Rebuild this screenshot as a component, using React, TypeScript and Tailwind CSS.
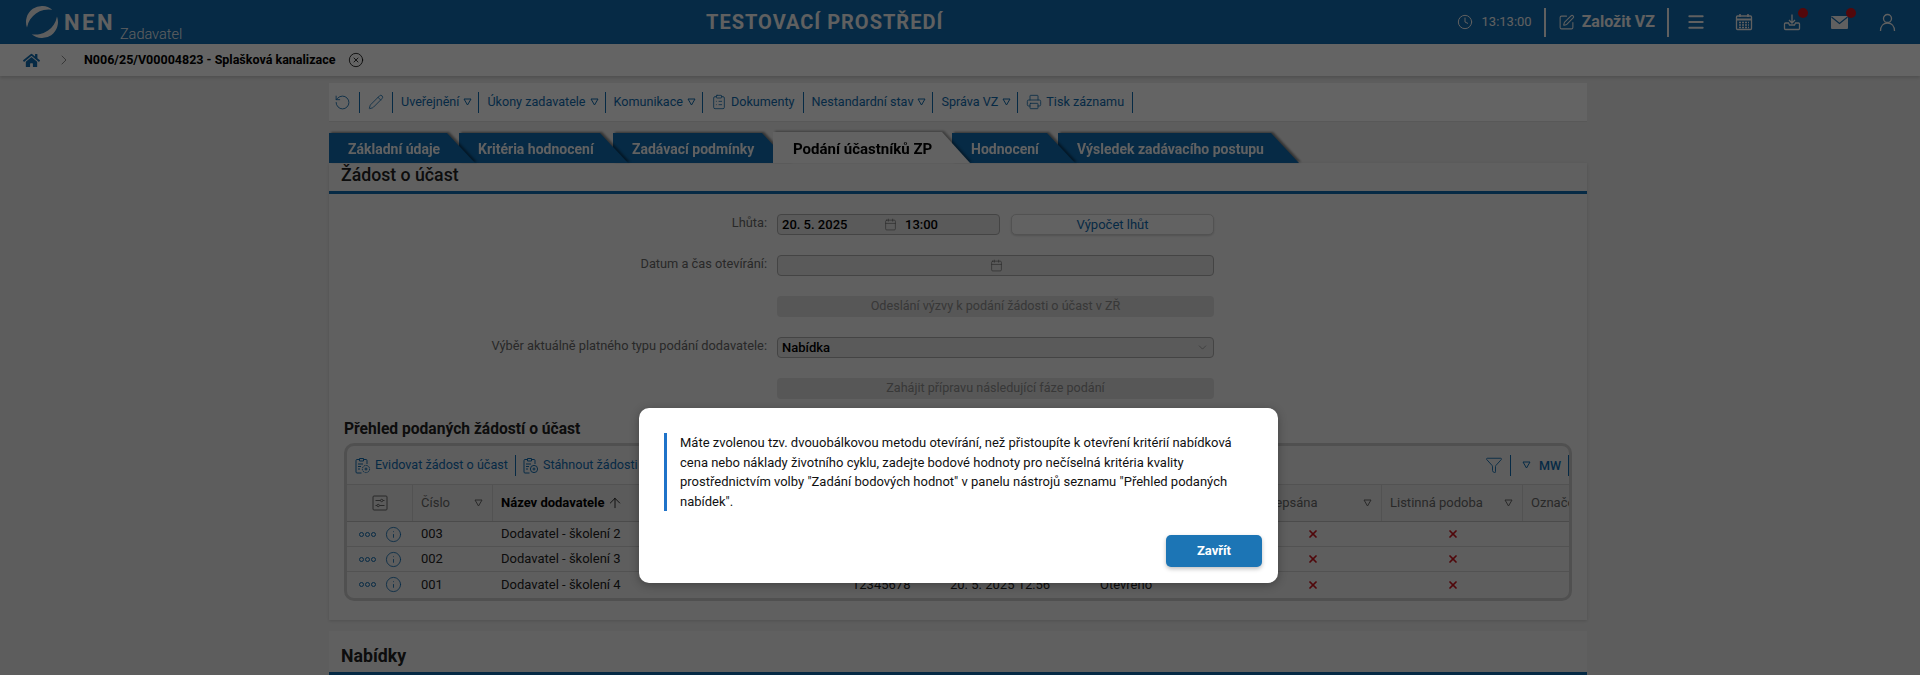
import { Clock, SquarePen, Menu, Calendar, ChevronRight, CircleX, RotateCcw, Pencil, ClipboardList, Printer, ChevronDown, Funnel, Info, ArrowUp, X } from 'lucide-react';
import { FaHome } from 'react-icons/fa';

const tabShape = '[clip-path:polygon(0_0,calc(100%-28px)_0,100%_100%,0_100%)]';

function Tri({ className = '' }: { className?: string }) {
  return (
    <svg width="9" height="8" viewBox="0 0 9 8" className={`shrink-0 ${className}`}>
      <path d="M1 1h7L4.5 7z" fill="none" stroke="currentColor" strokeWidth="1" />
    </svg>
  );
}

function Sep() {
  return <span className="w-px h-[21px] bg-[#0f69ac] shrink-0" />;
}

function Logo() {
  return (
    <svg width="34" height="34" viewBox="0 0 34 34" className="shrink-0">
      <path d="M27.3 4.7A16 16 0 0 0 2 22.5A22 22 0 0 1 27.3 4.7z" fill="#ececec" />
      <path d="M6.7 29.3A16 16 0 0 0 32 11.5A22 22 0 0 1 6.7 29.3z" fill="#ececec" />
    </svg>
  );
}

function CalendarGrid() {
  return (
    <svg width="18" height="18" viewBox="0 0 18 18" className="ml-[29px] shrink-0" fill="none" stroke="currentColor">
      <rect x="1.5" y="3" width="15" height="13.5" rx="1" strokeWidth="1.3" />
      <path d="M1.5 6.5h15" strokeWidth="2" />
      <path d="M5 1v3M13 1v3" strokeWidth="1.6" />
      <path d="M4 9.5h10M4 12h10M4 14.5h10" strokeWidth="1.4" strokeDasharray="2 1" />
    </svg>
  );
}

function Inbox() {
  return (
    <svg width="18" height="18" viewBox="0 0 18 18" className="shrink-0" fill="none" stroke="currentColor" strokeWidth="1.3">
      <path d="M9 1.5v8M6 7l3 3 3-3" />
      <path d="M5.5 10H2.5a1 1 0 0 0-1 1v4.5a1 1 0 0 0 1 1h13a1 1 0 0 0 1-1V11a1 1 0 0 0-1-1h-3l-1 2h-5z" />
    </svg>
  );
}

function MailFilled() {
  return (
    <svg width="19" height="15" viewBox="0 0 19 15" className="shrink-0">
      <rect x="1" y="1" width="17" height="13" rx="1" fill="currentColor" />
      <path d="M1.5 2l8 6.5 8-6.5" fill="none" stroke="#0f69ac" strokeWidth="1.2" />
    </svg>
  );
}

function ClipBadge({ plus }: { plus?: boolean }) {
  return (
    <svg width="17" height="17" viewBox="0 0 17 17" className="shrink-0" fill="none" stroke="currentColor" strokeWidth="1">
      <path d="M5 2.5H3a1 1 0 0 0-1 1V15a1 1 0 0 0 1 1h4.5M10 2.5h2a1 1 0 0 1 1 1V7" />
      <path d="M5.5 1.5h4v2.5h-4zM4 7h5M4 9.5h3M4 12h2" />
      <circle cx="12" cy="12" r="3.6" strokeDasharray={plus ? undefined : '1.6 0.8'} />
      {plus ? <path d="M10.5 12h3M12 10.5v3" /> : <circle cx="12" cy="12" r="1" />}
    </svg>
  );
}

function Sliders() {
  return (
    <svg width="16" height="16" viewBox="0 0 16 16" fill="none" stroke="currentColor" strokeWidth="1">
      <rect x="1" y="1" width="14" height="14" rx="1" />
      <path d="M3.5 5.5h5M11 5.5h1.5M3.5 10.5H5M7.5 10.5h5" />
      <circle cx="9.7" cy="5.5" r="1.2" />
      <circle cx="6.2" cy="10.5" r="1.2" />
    </svg>
  );
}

function Tab({ label, className }: { label: string; className: string }) {
  return (
    <div className={`relative drop-shadow-[2px_-1px_1px_rgba(0,0,0,0.45)] ${className}`}>
      <div className={`h-full bg-[#0f69ac] text-[#f2f2f2] font-bold text-[14px] pl-[19px] pt-[6px] whitespace-nowrap ${tabShape}`}>
        {label}
      </div>
    </div>
  );
}

function FormRow({ label, children }: { label?: string; children: React.ReactNode }) {
  return (
    <div className="flex h-[21px] items-center">
      <div className="w-[448px] pr-[10px] text-right text-[12.8px] text-[#666] -mt-[3px]">{label}</div>
      <div className="w-[437px] h-full flex gap-[11px]">{children}</div>
    </div>
  );
}

function DisabledButton({ label }: { label: string }) {
  return (
    <div className="w-full h-full rounded-[4px] bg-[#d9d9d9] text-[#8c8c8c] text-[12.6px] flex items-center justify-center">{label}</div>
  );
}

// only the last row sticks out below the dialog
const rows = [
  { no: '003', name: 'Dodavatel - školení 2' },
  { no: '002', name: 'Dodavatel - školení 3' },
  { no: '001', name: 'Dodavatel - školení 4', ico: '12345678', date: '20. 5. 2025 12:56', state: 'Otevřeno' },
];

const triGap = '-ml-[4px] -mr-[2px]';

export default function App() {
  return (
    <div className="relative h-[675px] overflow-hidden bg-[#e9e9e9] font-['Roboto',sans-serif] text-[#222]">
      <header className="h-11 bg-[#0f69ac] text-[#f0f0f0] flex items-center">
        <div className="flex items-start w-[706px] pl-[25px] h-full pt-[5px]">
          <Logo />
          <span className="ml-[5px] mt-[6px] text-[22px] leading-6 font-bold tracking-[2.5px]">NEN</span>
          <span className="ml-[5px] mt-[20px] text-[14.5px] leading-5 font-light">Zadavatel</span>
        </div>
        <div className="text-[20px] font-bold tracking-[1px] whitespace-nowrap">TESTOVACÍ PROSTŘEDÍ</div>
        <div className="ml-auto flex items-center h-full pr-[23px]">
          <Clock size={16} strokeWidth={1.5} />
          <span className="ml-[9px] text-[13px]">13:13:00</span>
          <span className="ml-[12px] w-[2px] h-[29px] bg-[#f0f0f0]" />
          <SquarePen size={17} strokeWidth={1.5} className="ml-[12px]" />
          <span className="ml-[7px] text-[16px] font-bold whitespace-nowrap">Založit VZ</span>
          <span className="ml-[12px] w-[2px] h-[29px] bg-[#f0f0f0]" />
          <Menu size={20} strokeWidth={2.4} className="ml-[17px]" />
          <CalendarGrid />
          <div className="relative ml-[30px]">
            <Inbox />
            <span className="absolute -top-[5px] left-[15px] size-[10px] rounded-full bg-[#d0141c]" />
          </div>
          <div className="relative ml-[29px]">
            <MailFilled />
            <span className="absolute -top-[7px] left-[16px] size-[10px] rounded-full bg-[#d0141c]" />
          </div>
          <svg width="19" height="19" viewBox="0 0 19 19" className="ml-[29px]" fill="none" stroke="currentColor" strokeWidth="1.3">
            <circle cx="9.5" cy="5.5" r="4" />
            <path d="M2.5 18c0-5 3-8 7-8s7 3 7 8" />
          </svg>
        </div>
      </header>

      <div className="h-8 bg-[#f9f9f9] flex items-center pl-[23px] shadow-[0_2px_3px_rgba(0,0,0,0.15)]">
        <FaHome size={17} className="text-[#0f69ac]" />
        <ChevronRight size={16} strokeWidth={1} className="ml-[16px] text-[#555]" />
        <span className="ml-[12px] text-[12.5px] font-bold text-black whitespace-nowrap">N006/25/V00004823 - Splašková kanalizace</span>
        <CircleX size={16} strokeWidth={1.2} className="ml-[13px] text-black" />
      </div>

      <main className="ml-[329px] w-[1258px] isolate">
        <div className="mt-[7px] h-[39px] bg-[#f9f9f9] border-b border-[#ddd] flex items-center gap-[8px] pl-[5px] text-[12.6px] text-[#0f69ac] whitespace-nowrap">
          <RotateCcw size={17} strokeWidth={1.2} />
          <Sep />
          <Pencil size={16} strokeWidth={1.2} />
          <Sep />
          <span>Uveřejnění</span><Tri className={triGap} /><Sep />
          <span>Úkony zadavatele</span><Tri className={triGap} /><Sep />
          <span>Komunikace</span><Tri className={triGap} /><Sep />
          <ClipboardList size={16} strokeWidth={1.2} className="-mr-[4px]" />
          <span>Dokumenty</span><Sep />
          <span>Nestandardní stav</span><Tri className={triGap} /><Sep />
          <span>Správa VZ</span><Tri className={triGap} /><Sep />
          <Printer size={16} strokeWidth={1.2} className="-mr-[4px]" />
          <span>Tisk záznamu</span><Sep />
        </div>

        <div className="mt-[10px] h-[31px] flex items-end">
          <Tab label="Základní údaje" className="z-30 w-[146px] h-[30px]" />
          <Tab label="Kritéria hodnocení" className="z-20 w-[169px] h-[30px] -ml-[16px]" />
          <Tab label="Zadávací podmínky" className="z-10 w-[177px] h-[30px] -ml-[15px]" />
          <div className="relative z-40 w-[197px] h-[31px] -ml-[17px] drop-shadow-[2px_-1px_1px_rgba(0,0,0,0.35)]">
            <div className={`h-full bg-[#f5f5f5] text-black font-bold text-[15px] pl-[20px] pt-[6px] whitespace-nowrap ${tabShape}`}>Podání účastníků ZP</div>
          </div>
          <Tab label="Hodnocení" className="z-20 w-[123px] h-[30px] -ml-[18px]" />
          <Tab label="Výsledek zadávacího postupu" className="z-10 w-[241px] h-[30px] -ml-[17px]" />
        </div>

        <section className="bg-[#f0f0f0] h-[457px] shadow-[0_1px_3px_rgba(0,0,0,0.15)]">
          <h2 className="h-[31px] border-b-[3px] border-[#0f69ac] pl-[12px] text-[17.7px] font-medium leading-[24px] text-[#222]">Žádost o účast</h2>
          <div className="pt-[20px] flex flex-col gap-[20px]">
            <FormRow label="Lhůta:">
              <div className="w-[223px] border border-[#aaa] rounded-[4px] bg-[#e2e2e2] flex items-center pl-[4px] text-[13px] font-medium text-black">
                <span className="w-[102px]">20. 5. 2025</span>
                <Calendar size={13} strokeWidth={1.2} className="text-[#666]" />
                <span className="ml-[8px]">13:00</span>
              </div>
              <div className="flex-1 border border-[#ccc] rounded-[5px] bg-[#f5f5f5] shadow-[0_1px_2px_rgba(0,0,0,0.15)] text-[#0f69ac] text-[13px] flex items-center justify-center">Výpočet lhůt</div>
            </FormRow>
            <FormRow label="Datum a čas otevírání:">
              <div className="w-full border border-[#aaa] rounded-[4px] bg-[#e2e2e2] flex items-center pl-[212px]">
                <Calendar size={13} strokeWidth={1.2} className="text-[#666]" />
              </div>
            </FormRow>
            <FormRow><DisabledButton label="Odeslání výzvy k podání žádosti o účast v ZŘ" /></FormRow>
            <FormRow label="Výběr aktuálně platného typu podání dodavatele:">
              <div className="w-full border border-[#aaa] rounded-[4px] bg-[#e2e2e2] flex items-center justify-between px-[4px] text-[13px] font-medium text-black">
                <span>Nabídka</span>
                <ChevronDown size={13} strokeWidth={1} className="text-[#666]" />
              </div>
            </FormRow>
            <FormRow><DisabledButton label="Zahájit přípravu následující fáze podání" /></FormRow>
          </div>

          <h3 className="mt-[20px] h-[24px] pl-[15px] text-[15.6px] font-bold leading-5 text-[#222]">Přehled podaných žádostí o účast</h3>
          <div className="ml-[15px] w-[1228px] h-[158px] border-[3px] border-[#c8c8c8] rounded-[10px] overflow-hidden bg-[#ececec]">
            <div className="h-[39px] flex items-center text-[12.6px] text-[#0f69ac] border-b border-[#ccc] pl-[7px] whitespace-nowrap">
              <ClipBadge />
              <span className="ml-[4px]">Evidovat žádost o účast</span>
              <span className="ml-[7px] w-px h-[21px] bg-[#0f69ac]" />
              <span className="ml-[6px]"><ClipBadge plus /></span>
              <span className="ml-[4px]">Stáhnout žádosti</span>
              <div className="ml-auto flex items-center">
                <Funnel size={18} strokeWidth={1.2} />
                <span className="ml-[7px] w-px h-[21px] bg-[#0f69ac]" />
                <Tri className="ml-[11px]" />
                <span className="ml-[8px] font-medium pt-[2px]">MW</span>
                <span className="ml-[7px] w-px h-[21px] bg-[#0f69ac]" />
              </div>
            </div>
            <div className="h-[37px] bg-[#e3e3e3] border-b border-[#bbb] flex text-[13px] text-[#666] whitespace-nowrap">
              <div className="w-[66px] shrink-0 border-r border-[#ccc] flex items-center justify-center"><Sliders /></div>
              <div className="w-[80px] shrink-0 border-r border-[#ccc] flex items-center justify-between pl-[8px] pr-[9px]">Číslo<Tri /></div>
              <div className="w-[347px] shrink-0 border-r border-[#ccc] flex items-center pl-[8px] font-bold text-black">Název dodavatele<ArrowUp size={16} strokeWidth={1.2} className="ml-[2px]" /></div>
              <div className="w-[100px] shrink-0 border-r border-[#ccc]" />
              <div className="w-[150px] shrink-0 border-r border-[#ccc]" />
              <div className="w-[138px] shrink-0 border-r border-[#ccc]" />
              <div className="w-[154px] shrink-0 border-r border-[#ccc] flex items-center justify-between pl-[8px] pr-[9px]">Je podepsána<Tri /></div>
              <div className="w-[141px] shrink-0 border-r border-[#ccc] flex items-center justify-between pl-[8px] pr-[9px]">Listinná podoba<Tri /></div>
              <div className="pl-[8px] flex items-center">Označení</div>
            </div>
            {rows.map((r) => (
              <div key={r.no} className="h-[25px] flex items-center text-[13px] text-[#222] border-b border-[#ccc] last:border-b-0 whitespace-nowrap">
                <div className="w-[66px] shrink-0 flex items-center pl-[12px] text-[#0f69ac]">
                  <span className="flex gap-[1px]">
                    <span className="size-[5px] rounded-full border border-current" />
                    <span className="size-[5px] rounded-full border border-current" />
                    <span className="size-[5px] rounded-full border border-current" />
                  </span>
                  <Info size={17} strokeWidth={1.2} className="ml-[9px]" />
                </div>
                <div className="w-[80px] shrink-0 pl-[8px]">{r.no}</div>
                <div className="w-[347px] shrink-0 pl-[8px]">{r.name}</div>
                <div className="w-[100px] shrink-0 pl-[12px]">{r.ico}</div>
                <div className="w-[150px] shrink-0 pl-[10px]">{r.date}</div>
                <div className="w-[138px] shrink-0 pl-[10px]">{r.state}</div>
                <div className="w-[154px] shrink-0 pl-[79px]"><X size={12} strokeWidth={3.5} className="text-[#c8141c]" /></div>
                <div className="w-[141px] shrink-0 pl-[65px]"><X size={12} strokeWidth={3.5} className="text-[#c8141c]" /></div>
              </div>
            ))}
          </div>
        </section>

        <section className="mt-[11px] bg-[#f0f0f0]">
          <h2 className="h-[44px] border-b-[3px] border-[#0f69ac] pl-[12px] pt-[13px] text-[17.7px] font-bold leading-[24px] text-[#222]">Nabídky</h2>
        </section>
      </main>

      <div className="absolute inset-0 z-50 bg-black/60 flex justify-center pt-[408px]">
        <div className="relative w-[639px] h-[175px] -ml-[3px] bg-white rounded-[10px] pl-[25px] pr-[16px] pt-[25px] shadow-[0_2px_10px_rgba(0,0,0,0.3)]">
          <div className="border-l-[3px] border-[#1f73c9] pl-[13px] text-[13px] leading-[19.5px] text-[#111] w-[590px]">
            Máte zvolenou tzv. dvouobálkovou metodu otevírání, než přistoupíte k otevření kritérií nabídková cena nebo náklady životního cyklu, zadejte bodové hodnoty pro nečíselná kritéria kvality prostřednictvím volby "Zadání bodových hodnot" v panelu nástrojů seznamu "Přehled podaných nabídek".
          </div>
          <div className="mt-[24px] flex justify-end">
            <button className="w-[96px] h-[32px] rounded-[5px] bg-[#1c75b5] text-white text-[13px] font-bold shadow-[0_2px_4px_rgba(0,0,0,0.25)]">Zavřít</button>
          </div>
        </div>
      </div>
    </div>
  );
}
